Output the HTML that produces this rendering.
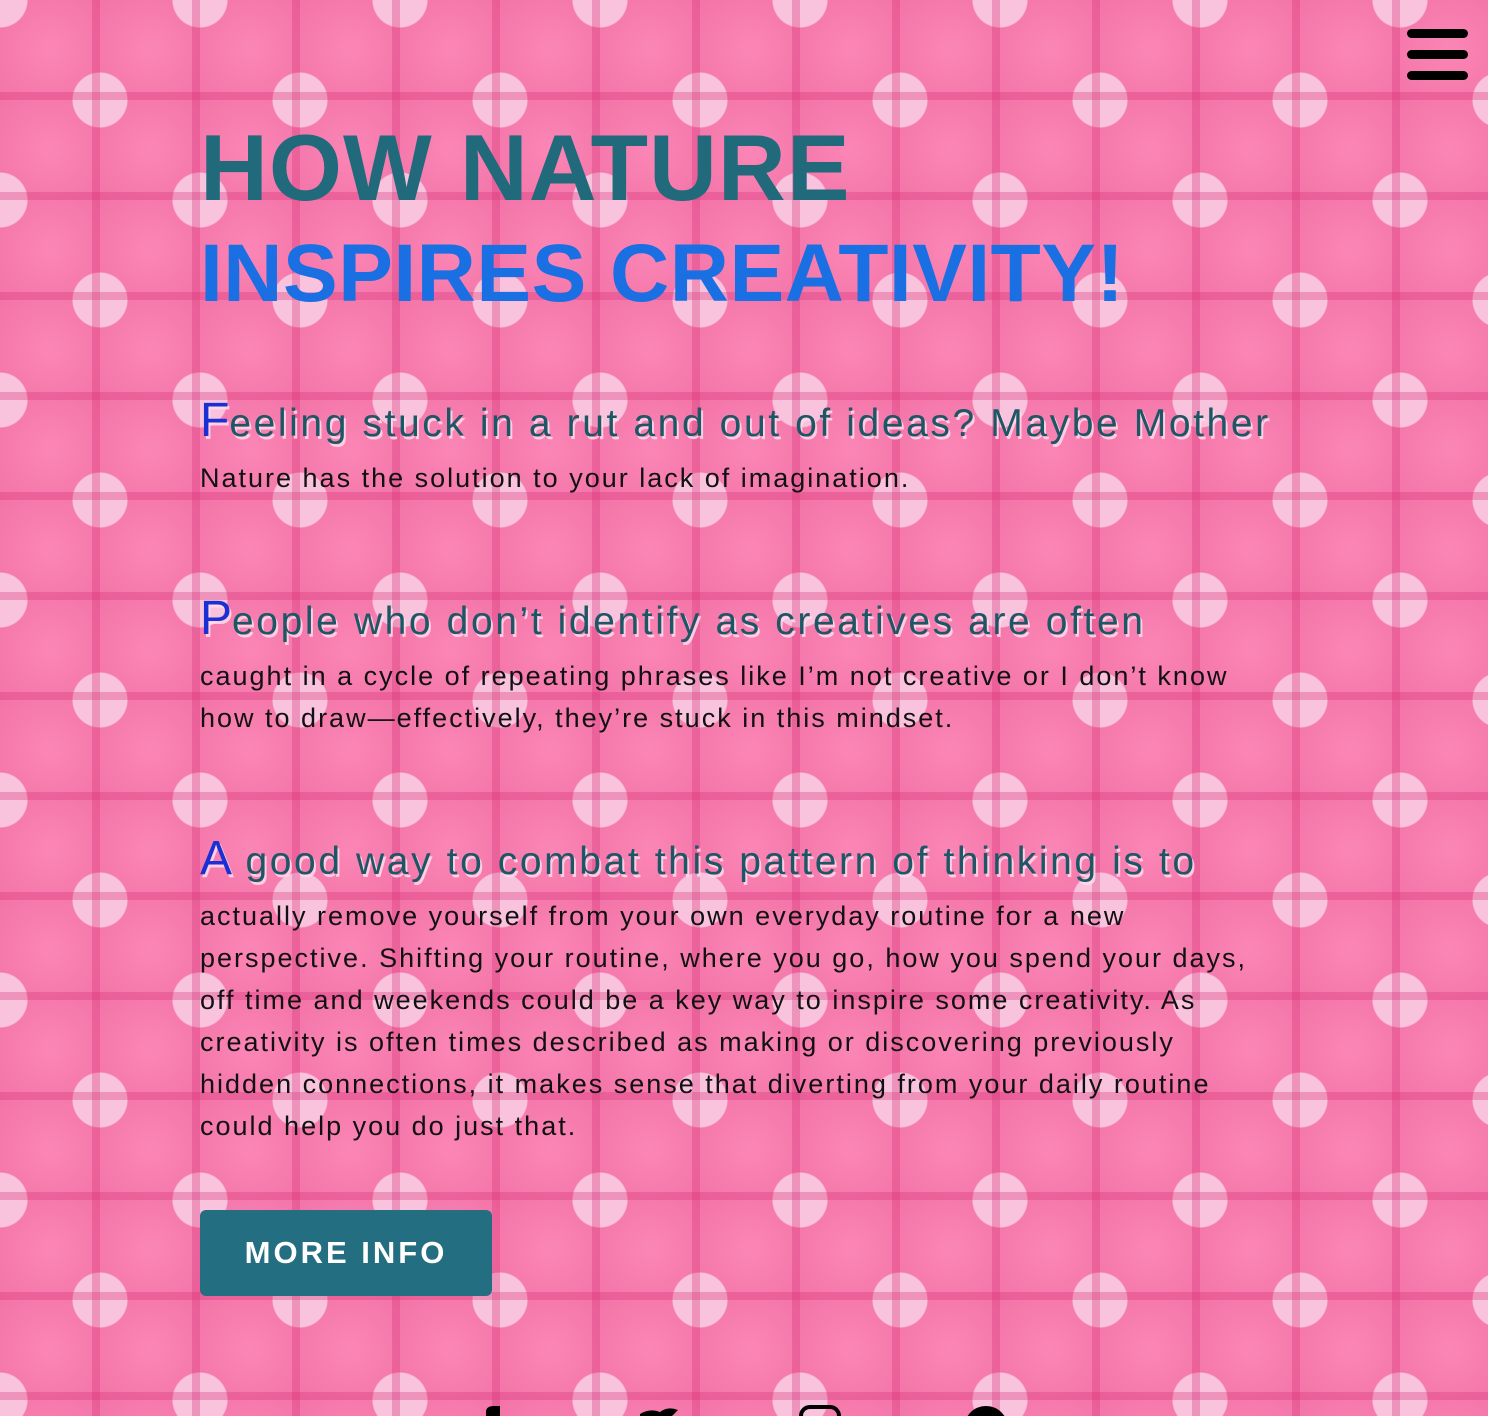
<!DOCTYPE html>
<html><head><meta charset="utf-8"><style>
html,body{margin:0;padding:0}
body{width:1488px;height:1416px;overflow:hidden;position:relative;font-family:"Liberation Sans",sans-serif;
background-color:#f67fb0;
background-image:
linear-gradient(90deg,transparent 92px,rgba(215,50,120,.33) 92px,rgba(215,50,120,.33) 108px,transparent 108px),
linear-gradient(180deg,transparent 92px,rgba(215,50,120,.33) 92px,rgba(215,50,120,.33) 108px,transparent 108px),
radial-gradient(circle at 0 0,#f9c3de 27px,transparent 28px),
radial-gradient(circle at 200px 0,#f9c3de 27px,transparent 28px),
radial-gradient(circle at 0 200px,#f9c3de 27px,transparent 28px),
radial-gradient(circle at 200px 200px,#f9c3de 27px,transparent 28px),
radial-gradient(circle at 100px 100px,#f9c3de 27px,transparent 28px),
radial-gradient(circle at 50px 50px,#fb86b6 0,#f374a8 70px);
background-size:100px 100px,100px 100px,200px 200px,200px 200px,200px 200px,200px 200px,200px 200px,100px 100px;
}
.h1{position:absolute;left:200px;top:118px;font-weight:bold;font-size:94px;color:#216a7c;letter-spacing:1px;white-space:nowrap;line-height:100px}
.h2{position:absolute;left:200px;top:229px;font-weight:bold;font-size:82px;color:#1a6fe2;letter-spacing:0.5px;white-space:nowrap;line-height:90px}
.lead{position:absolute;left:200px;font-size:39px;letter-spacing:2.6px;color:#1d5665;white-space:nowrap;text-shadow:2px 3px 0 rgba(255,220,235,.85);line-height:50px}
.lead b{font-weight:normal;color:#1b30d4;font-size:48px;letter-spacing:0}
.body{position:absolute;left:200px;font-size:27px;letter-spacing:2px;color:#111;white-space:nowrap;line-height:42px}
.btn{position:absolute;left:200px;top:1210px;width:292px;height:86px;background:#236e80;border-radius:6px;color:#fff;font-weight:bold;font-size:31px;letter-spacing:3px;text-align:center;line-height:86px}
.bar{position:absolute;left:1407px;width:61px;height:9px;background:#000;border-radius:5px}
</style></head><body>
<div class="bar" style="top:29px"></div><div class="bar" style="top:50px"></div><div class="bar" style="top:71px"></div>
<div class="h1">HOW NATURE</div>
<div class="h2">INSPIRES CREATIVITY!</div>
<div class="lead" style="top:396px"><b>F</b>eeling stuck in a rut and out of ideas? Maybe Mother</div>
<div class="body" style="top:457px">Nature has the solution to your lack of imagination.</div>
<div class="lead" style="top:594px"><b>P</b>eople who don’t identify as creatives are often</div>
<div class="body" style="top:655px">caught in a cycle of repeating phrases like I’m not creative or I don’t know<br>how to draw—effectively, they’re stuck in this mindset.</div>
<div class="lead" style="top:834px"><b>A</b> good way to combat this pattern of thinking is to</div>
<div class="body" style="top:895px">actually remove yourself from your own everyday routine for a new<br>perspective. Shifting your routine, where you go, how you spend your days,<br>off time and weekends could be a key way to inspire some creativity. As<br>creativity is often times described as making or discovering previously<br>hidden connections, it makes sense that diverting from your daily routine<br>could help you do just that.</div>
<div class="btn">MORE INFO</div>
<svg style="position:absolute;left:0;top:1396px" width="1488" height="20">
<path d="M486 20 V16 Q486 10 494 10 H500 V20Z" fill="#000"/>
<path d="M640 18 Q650 12 660 16 Q668 10 678 14 L672 20 H640Z" fill="#000"/>
<rect x="801" y="11" width="38" height="20" rx="9" fill="none" stroke="#000" stroke-width="4"/>
<circle cx="986" cy="32" r="22" fill="#000"/>
</svg>
</body></html>
